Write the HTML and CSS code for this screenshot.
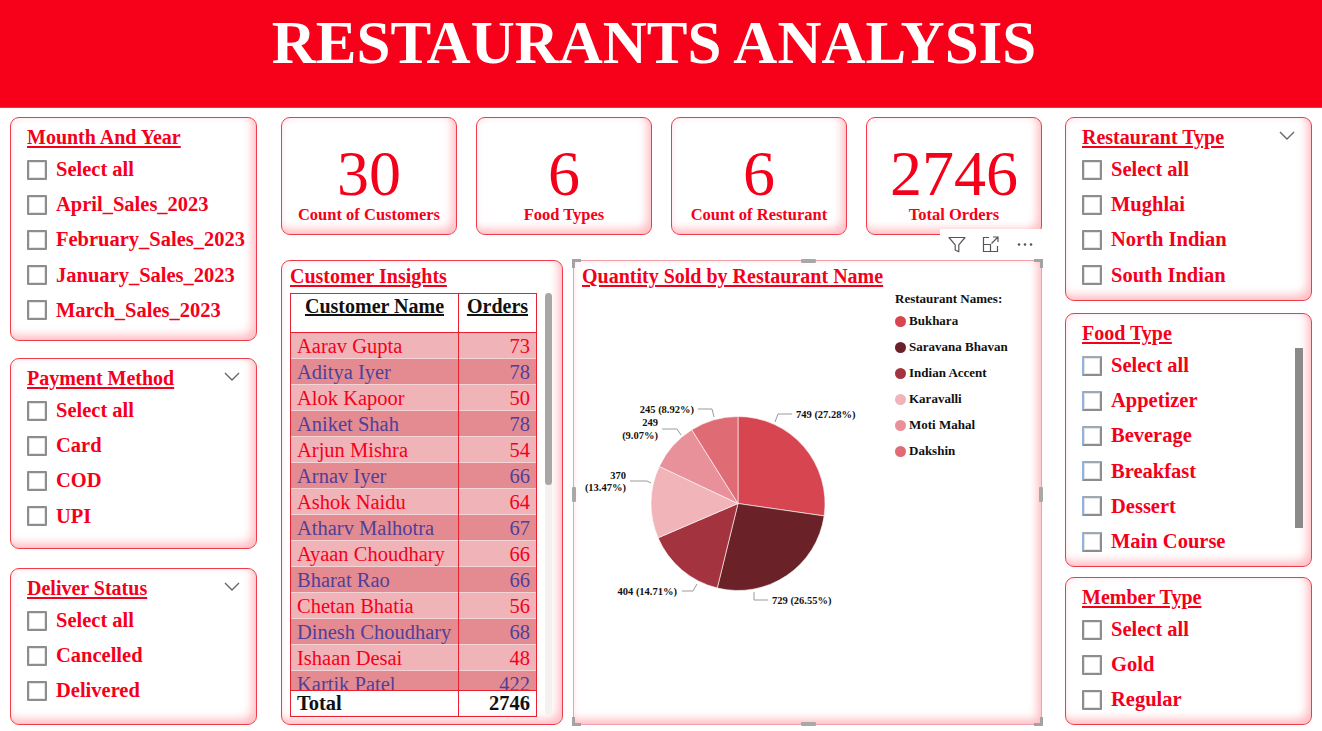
FILE: index.html
```html
<!DOCTYPE html>
<html lang="en">
<head>
<meta charset="utf-8">
<title>Restaurants Analysis</title>
<link rel="stylesheet" href="styles.css">
</head>
<body>
<header class="top">
  <h1 class="top-title">RESTAURANTS ANALYSIS</h1>
</header>
<main class="board">
  <section class="col col-left">
    <div class="card slicer h-month">
      <div class="sl-head"><span class="sl-title">Mounth And Year</span></div>
      <ul class="sl-list">
        <li><span class="cb"></span>Select all</li>
        <li><span class="cb"></span>April_Sales_2023</li>
        <li><span class="cb"></span>February_Sales_2023</li>
        <li><span class="cb"></span>January_Sales_2023</li>
        <li><span class="cb"></span>March_Sales_2023</li>
      </ul>
    </div>
    <div class="card slicer h-pay">
      <div class="sl-head"><span class="sl-title">Payment Method</span>
        <svg class="chev" width="16" height="9" viewBox="0 0 16 9"><path d="M1 1 L8 8 L15 1" fill="none" stroke="#666" stroke-width="1.4"/></svg>
      </div>
      <ul class="sl-list">
        <li><span class="cb"></span>Select all</li>
        <li><span class="cb"></span>Card</li>
        <li><span class="cb"></span>COD</li>
        <li><span class="cb"></span>UPI</li>
      </ul>
    </div>
    <div class="card slicer h-deliver">
      <div class="sl-head"><span class="sl-title">Deliver Status</span>
        <svg class="chev" width="16" height="9" viewBox="0 0 16 9"><path d="M1 1 L8 8 L15 1" fill="none" stroke="#666" stroke-width="1.4"/></svg>
      </div>
      <ul class="sl-list">
        <li><span class="cb"></span>Select all</li>
        <li><span class="cb"></span>Cancelled</li>
        <li><span class="cb"></span>Delivered</li>
      </ul>
    </div>
  </section>

  <section class="col-center">
    <div class="kpis">
      <div class="card kpi"><div class="kpi-num">30</div><div class="kpi-lbl">Count of Customers</div></div>
      <div class="card kpi"><div class="kpi-num">6</div><div class="kpi-lbl">Food Types</div></div>
      <div class="card kpi"><div class="kpi-num">6</div><div class="kpi-lbl">Count of Resturant</div></div>
      <div class="card kpi"><div class="kpi-num">2746</div><div class="kpi-lbl">Total Orders</div></div>
    </div>
    <div class="lower">
      <div class="card insights">
        <div class="vis-title">Customer Insights</div>
        <div class="tbl-wrap">
          <div class="tbl">
            <div class="trow thead"><div class="c1">Customer Name</div><div class="c2">Orders</div></div>
            <div class="tbody">
              <div class="trow r-a"><div class="c1">Aarav Gupta</div><div class="c2">73</div></div>
              <div class="trow r-b"><div class="c1">Aditya Iyer</div><div class="c2">78</div></div>
              <div class="trow r-a"><div class="c1">Alok Kapoor</div><div class="c2">50</div></div>
              <div class="trow r-b"><div class="c1">Aniket Shah</div><div class="c2">78</div></div>
              <div class="trow r-a"><div class="c1">Arjun Mishra</div><div class="c2">54</div></div>
              <div class="trow r-b"><div class="c1">Arnav Iyer</div><div class="c2">66</div></div>
              <div class="trow r-a"><div class="c1">Ashok Naidu</div><div class="c2">64</div></div>
              <div class="trow r-b"><div class="c1">Atharv Malhotra</div><div class="c2">67</div></div>
              <div class="trow r-a"><div class="c1">Ayaan Choudhary</div><div class="c2">66</div></div>
              <div class="trow r-b"><div class="c1">Bharat Rao</div><div class="c2">66</div></div>
              <div class="trow r-a"><div class="c1">Chetan Bhatia</div><div class="c2">56</div></div>
              <div class="trow r-b"><div class="c1">Dinesh Choudhary</div><div class="c2">68</div></div>
              <div class="trow r-a"><div class="c1">Ishaan Desai</div><div class="c2">48</div></div>
              <div class="trow r-b"><div class="c1">Kartik Patel</div><div class="c2">422</div></div>
            </div>
            <div class="trow tfoot"><div class="c1">Total</div><div class="c2">2746</div></div>
          </div>
          <div class="vscroll"><div class="vthumb"></div></div>
        </div>
      </div>

      <div class="card chart">
        <div class="toolbar">
          <span class="tb-slot"><svg width="18" height="17" viewBox="0 0 18 17"><path d="M1 1.5 H17 L10.8 8.8 V15.8 L7.2 14 V8.8 Z" fill="none" stroke="#555" stroke-width="1.2" stroke-linejoin="round"/></svg></span>
          <span class="tb-slot"><svg width="18" height="17" viewBox="0 0 18 17"><path d="M7 1.5 H1.5 V15.5 H15.5 V10 M1.5 8.5 H8.5 V15.5 M9.5 7.5 L16 1 M11 1 H16 V6" fill="none" stroke="#555" stroke-width="1.2"/></svg></span>
          <span class="tb-slot"><svg width="18" height="17" viewBox="0 0 18 17"><circle cx="3" cy="8.5" r="1.3" fill="#555"/><circle cx="9" cy="8.5" r="1.3" fill="#555"/><circle cx="15" cy="8.5" r="1.3" fill="#555"/></svg></span>
        </div>
        <span class="hd hd-tl"></span><span class="hd hd-tr"></span><span class="hd hd-bl"></span><span class="hd hd-br"></span>
        <span class="hm hm-t"></span><span class="hm hm-b"></span><span class="hm hm-l"></span><span class="hm hm-r"></span>
        <div class="vis-title chart-title">Quantity Sold by Restaurant Name</div>
        <div class="chart-body">
          <svg class="pie" width="315" height="436" viewBox="0 0 315 436">
            <g stroke="#fff" stroke-width="0.6">
              <path d="M164 215.5 L164 128.5 A87 87 0 0 1 250.11 227.92 Z" fill="#d64550"/>
              <path d="M164 215.5 L250.11 227.92 A87 87 0 0 1 143.27 299.99 Z" fill="#6b2128"/>
              <path d="M164 215.5 L143.27 299.99 A87 87 0 0 1 84.07 249.85 Z" fill="#a3343f"/>
              <path d="M164 215.5 L84.07 249.85 A87 87 0 0 1 85.30 178.41 Z" fill="#f0b4b9"/>
              <path d="M164 215.5 L85.30 178.41 A87 87 0 0 1 117.75 141.81 Z" fill="#e8919a"/>
              <path d="M164 215.5 L117.75 141.81 A87 87 0 0 1 164 128.5 Z" fill="#df6b74"/>
            </g>
            <g fill="none" stroke="#9a9a9a" stroke-width="1">
              <path d="M201 134 L204 126 H218"/>
              <path d="M180 304 V312 H194"/>
              <path d="M108 303 H119 L123 296"/>
              <path d="M56 193 H73 L77 195"/>
              <path d="M88 141 H103 L107 147"/>
              <path d="M124 121 H138 L140 129"/>
            </g>
            <g class="plbl">
              <text x="222" y="130">749 (27.28%)</text>
              <text x="198" y="316">729 (26.55%)</text>
              <text x="103" y="307" text-anchor="end">404 (14.71%)</text>
              <text x="52" y="191" text-anchor="end">370</text>
              <text x="52" y="203" text-anchor="end">(13.47%)</text>
              <text x="84" y="138" text-anchor="end">249</text>
              <text x="84" y="151" text-anchor="end">(9.07%)</text>
              <text x="120" y="125" text-anchor="end">245 (8.92%)</text>
            </g>
          </svg>
          <div class="legend">
            <div class="lg-title">Restaurant Names:</div>
            <div class="lg-item"><span class="dot d1"></span>Bukhara</div>
            <div class="lg-item"><span class="dot d2"></span>Saravana Bhavan</div>
            <div class="lg-item"><span class="dot d3"></span>Indian Accent</div>
            <div class="lg-item"><span class="dot d4"></span>Karavalli</div>
            <div class="lg-item"><span class="dot d5"></span>Moti Mahal</div>
            <div class="lg-item"><span class="dot d6"></span>Dakshin</div>
          </div>
        </div>
      </div>
    </div>
  </section>

  <section class="col col-right">
    <div class="card slicer h-rtype">
      <div class="sl-head"><span class="sl-title">Restaurant Type</span>
        <svg class="chev" width="16" height="9" viewBox="0 0 16 9"><path d="M1 1 L8 8 L15 1" fill="none" stroke="#666" stroke-width="1.4"/></svg>
      </div>
      <ul class="sl-list">
        <li><span class="cb"></span>Select all</li>
        <li><span class="cb"></span>Mughlai</li>
        <li><span class="cb"></span>North Indian</li>
        <li><span class="cb"></span>South Indian</li>
      </ul>
    </div>
    <div class="card slicer h-food">
      <div class="sl-head"><span class="sl-title">Food Type</span></div>
      <div class="sl-scrollwrap">
        <ul class="sl-list">
          <li><span class="cb cb-focus"></span>Select all</li>
          <li><span class="cb cb-focus"></span>Appetizer</li>
          <li><span class="cb cb-focus"></span>Beverage</li>
          <li><span class="cb cb-focus"></span>Breakfast</li>
          <li><span class="cb cb-focus"></span>Dessert</li>
          <li><span class="cb cb-focus"></span>Main Course</li>
        </ul>
        <div class="sl-scroll"></div>
      </div>
    </div>
    <div class="card slicer h-member">
      <div class="sl-head"><span class="sl-title">Member Type</span></div>
      <ul class="sl-list">
        <li><span class="cb"></span>Select all</li>
        <li><span class="cb"></span>Gold</li>
        <li><span class="cb"></span>Regular</li>
      </ul>
    </div>
  </section>
</main>
</body>
</html>
```

FILE: styles.css
```css
* { box-sizing: border-box; }
html, body { margin: 0; padding: 0; background: #fff; }
body {
  width: 1322px;
  height: 731px;
  overflow: hidden;
  font-family: "Liberation Serif", "Times New Roman", serif;
  color: #f5001b;
}

.top {
  height: 108px;
  background: #f70019;
  border-bottom: 1px solid #4a74ad;
  padding: 13px 14px 0 0;
}
.top-title {
  margin: 0;
  text-align: center;
  color: #fff;
  font-size: 61px;
  line-height: 60px;
  font-weight: bold;
}

.board {
  display: grid;
  grid-template-columns: 247px 1fr 247px;
  padding: 9px 10px 0 10px;
}

.col {
  display: flex;
  flex-direction: column;
  height: 608px;
}

.card {
  position: relative;
  background: #fff;
  border: 1px solid #ee3c4a;
  border-radius: 9px;
  box-shadow: inset -6px -7px 9px -2px rgba(255, 140, 152, 0.55), inset 2px 2px 4px rgba(255, 210, 214, 0.35);
}

/* slicers */
.slicer { padding: 7px 16px 0 16px; }
.h-month { height: 224px; }
.h-pay { height: 191px; margin-top: 17px; }
.h-deliver { height: 157px; margin-top: 19px; }
.h-rtype { height: 184px; }
.h-food { height: 254px; margin-top: 12px; }
.h-member { height: 148px; margin-top: 10px; }

.sl-head {
  display: flex;
  justify-content: space-between;
  align-items: center;
  height: 24px;
}
.sl-title {
  font-size: 20px;
  line-height: 24px;
  font-weight: bold;
  text-decoration: underline;
  text-underline-offset: 2px;
}
.chev { margin-top: -3px; margin-right: 0; }

.sl-list {
  list-style: none;
  margin: 3px 0 0 0;
  padding: 0;
}
.sl-list li {
  display: flex;
  align-items: center;
  height: 35.2px;
  font-size: 20.5px;
  font-weight: bold;
  white-space: nowrap;
}
.cb {
  width: 20px;
  height: 20px;
  flex: none;
  margin-right: 9px;
  border: 2px solid #8d8d8d;
  border-radius: 1px;
  background: #fff;
  box-shadow: inset 0 0 0 1px #e4e4e4;
}
.cb-focus { border-left-color: #8fb3dc; border-top-color: #9fa9b6; }

.sl-scrollwrap {
  display: flex;
  align-items: flex-start;
  margin-top: 3px;
}
.sl-scrollwrap .sl-list { margin-top: 0; flex: 1; }
.sl-scroll {
  width: 8px;
  height: 180px;
  background: #8a8a8a;
  margin-right: -8px;
}

/* center */
.col-center { padding: 0 23px 0 24px; }
.kpis {
  display: flex;
  justify-content: space-between;
  height: 118px;
}
.kpi {
  width: 176px;
  display: flex;
  flex-direction: column;
  justify-content: flex-end;
  align-items: center;
  padding-bottom: 10px;
}
.kpi-num {
  font-size: 64px;
  line-height: 54px;
  margin-bottom: 4px;
}
.kpi-lbl {
  font-size: 16.5px;
  line-height: 19px;
  font-weight: bold;
  white-space: nowrap;
}

.lower {
  display: flex;
  gap: 10px;
  margin-top: 25px;
  height: 465px;
}

.vis-title {
  font-size: 20px;
  line-height: 24px;
  font-weight: bold;
  text-decoration: underline;
  text-underline-offset: 2px;
}

.insights {
  width: 282px;
  padding: 3px 0 0 8px;
}
.tbl-wrap {
  display: flex;
  margin-top: 5px;
}
.tbl {
  width: 247px;
  border: 1px solid #e9202f;
}
.trow {
  display: grid;
  grid-template-columns: 168px 1fr;
}
.trow .c1 { border-right: 1px solid #e9202f; white-space: nowrap; overflow: hidden; }
.thead {
  height: 39px;
  border-bottom: 1px solid #e9202f;
  color: #111;
  font-weight: bold;
  font-size: 20px;
  line-height: 24px;
  text-decoration: underline;
  text-align: center;
}
.thead > div { padding-top: 0; }
.tbody {
  height: 357px;
  overflow: hidden;
}
.tbody .trow {
  height: 26px;
  font-size: 20.5px;
  line-height: 26px;
  border-bottom: 1px solid #f4d4d7;
}
.tbody .c1 { padding-left: 6px; }
.tbody .c2, .tfoot .c2 { text-align: right; padding-right: 6px; }
.r-a { background: #efb3b8; color: #f5001b; }
.r-b { background: #e48b92; color: #4f3f98; }
.tfoot {
  height: 26px;
  border-top: 1px solid #e9202f;
  color: #111;
  font-weight: bold;
  font-size: 20.5px;
  line-height: 24px;
}
.tfoot .c1 { padding-left: 6px; }

.vscroll {
  width: 7px;
  margin-left: 8px;
  height: 422px;
  border-radius: 4px;
  background: #f6f1f1;
}
.vthumb {
  height: 192px;
  border-radius: 4px;
  background: #a9a6a6;
}

/* chart */
.chart {
  width: 469px;
  border-color: #eba3a9;
  border-radius: 2px;
  padding: 3px 0 0 0;
}
.chart-title { padding-left: 8px; }
.chart-body { display: flex; }
.pie { display: block; flex: none; }
.plbl text {
  font-family: "Liberation Serif", "Times New Roman", serif;
  font-size: 10.5px;
  font-weight: bold;
  fill: #111;
}
.legend {
  padding: 3px 0 0 6px;
  color: #111;
  font-weight: bold;
}
.lg-title { font-size: 13px; line-height: 16px; margin-bottom: 1px; }
.lg-item {
  display: flex;
  align-items: center;
  height: 26px;
  font-size: 13px;
}
.dot {
  width: 11px;
  height: 11px;
  border-radius: 50%;
  margin-right: 3px;
  flex: none;
}
.d1 { background: #d64550; }
.d2 { background: #6b2128; }
.d3 { background: #a3343f; }
.d4 { background: #f0b4b9; }
.d5 { background: #e8919a; }
.d6 { background: #df6b74; }

.toolbar {
  position: absolute;
  top: -32px;
  right: -1px;
  width: 102px;
  height: 30px;
  background: #fff;
  display: flex;
  align-items: center;
}
.tb-slot {
  width: 34px;
  display: flex;
  justify-content: center;
}
.tb-slot svg { display: block; }

.hd {
  position: absolute;
  width: 9px;
  height: 9px;
  border-color: #a3a3a3;
  border-style: solid;
  border-width: 0;
}
.hd-tl { top: -2px; left: -2px; border-top-width: 3px; border-left-width: 3px; }
.hd-tr { top: -2px; right: -2px; border-top-width: 3px; border-right-width: 3px; }
.hd-bl { bottom: -2px; left: -2px; border-bottom-width: 3px; border-left-width: 3px; }
.hd-br { bottom: -2px; right: -2px; border-bottom-width: 3px; border-right-width: 3px; }
.hm {
  position: absolute;
  background: #a8a8a8;
  border-radius: 1px;
}
.hm-t { top: -2px; left: 227px; width: 15px; height: 4px; }
.hm-b { bottom: -2px; left: 227px; width: 15px; height: 4px; }
.hm-l { left: -2px; top: 226px; width: 4px; height: 15px; }
.hm-r { right: -2px; top: 226px; width: 4px; height: 15px; }
```
